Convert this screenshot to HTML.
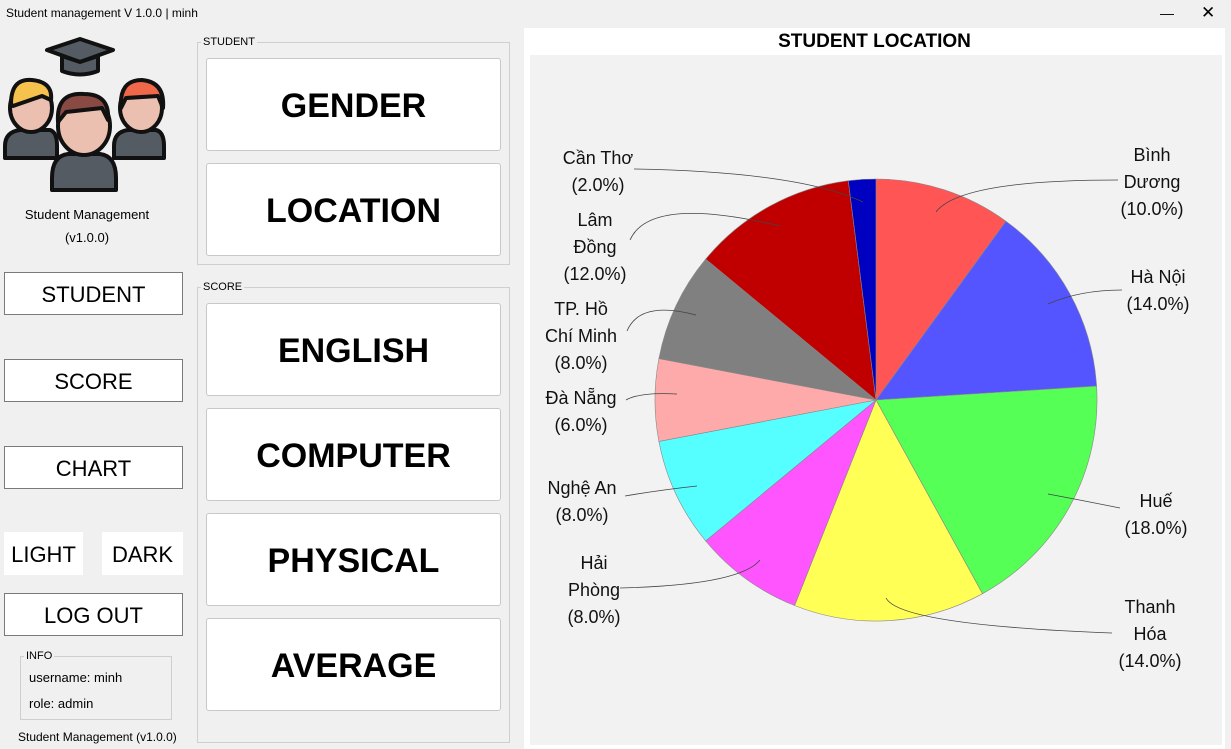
<!DOCTYPE html>
<html><head><meta charset="utf-8"><style>
*{box-sizing:border-box;margin:0;padding:0}
body{width:1231px;height:749px;background:#f0f0f0;font-family:"Liberation Sans",sans-serif;position:relative;overflow:hidden;color:#000}
.a{position:absolute}
.title{left:6px;top:6px;font-size:12px}
.btn{position:absolute;border:1px solid #7a7a7a;background:#fff;font-size:22px;display:flex;align-items:center;justify-content:center;padding-top:2px}
.nb{border:none}
.grp{position:absolute;border:1px solid #cfcfcf}
.lg{position:absolute;font-size:11px;background:#f0f0f0;padding:0 2px}
.big{position:absolute;left:206px;width:295px;height:93px;background:#fff;border:1px solid #c8c8c8;border-radius:3px;display:flex;align-items:center;justify-content:center;font-weight:bold;font-size:34px;padding-top:4px}
.lbl{position:absolute;font-size:18px;line-height:27px;text-align:center;color:#111}
</style></head><body>
<div class="a title">Student management V 1.0.0 | minh</div>
<div class="a" style="left:1160px;top:5px;font-size:14px">&#8212;</div>
<div class="a" style="left:1201px;top:3px;font-size:17px">&#10005;</div>

<svg class="a" style="left:2px;top:36px" width="166" height="156" viewBox="0 0 166 156">
<g stroke="#111" stroke-width="4" stroke-linejoin="round">
<path d="M45 14 L78 3 L111 14 L78 26 Z" fill="#555b63"/>
<path d="M60 20 L60 35 Q78 42 96 35 L96 20 L78 26 Z" fill="#555b63"/>
<path d="M3 110 Q3 96 18 94 L28 94 L28 86 L38 86 L38 94 L48 94 Q55 96 55 110 L55 122 L3 122 Z" fill="#555b63"/>
<ellipse cx="29" cy="72" rx="21" ry="24" fill="#ebc0b0"/>
<path d="M9 68 Q9 42 30 44 Q51 46 49 64 L40 60 L11 70 Z" fill="#f5c24d"/>
<path d="M112 110 Q112 96 126 94 L136 94 L136 86 L146 86 L146 94 L154 94 Q162 96 162 110 L162 122 L112 122 Z" fill="#555b63"/>
<ellipse cx="139" cy="72" rx="21" ry="24" fill="#ebc0b0"/>
<path d="M119 72 Q117 44 140 44 Q163 46 161 72 L156 60 L124 62 Z" fill="#f0684a"/>
<path d="M50 142 Q50 120 66 118 L74 118 L74 110 L90 110 L90 118 L98 118 Q114 120 114 142 L114 154 L50 154 Z" fill="#555b63"/>
<ellipse cx="82" cy="90" rx="26" ry="29" fill="#ebc0b0"/>
<path d="M56 86 Q54 56 82 58 Q108 58 106 84 L100 72 L64 76 Z" fill="#8a4a44"/>
</g></svg>
<div class="a" style="left:0;width:174px;top:203px;text-align:center;font-size:13px;line-height:23px">Student Management<br>(v1.0.0)</div>

<div class="btn" style="left:4px;top:272px;width:179px;height:43px">STUDENT</div>
<div class="btn" style="left:4px;top:359px;width:179px;height:43px">SCORE</div>
<div class="btn" style="left:4px;top:446px;width:179px;height:43px">CHART</div>
<div class="btn nb" style="left:4px;top:532px;width:79px;height:43px">LIGHT</div>
<div class="btn nb" style="left:102px;top:532px;width:81px;height:43px">DARK</div>
<div class="btn" style="left:4px;top:593px;width:179px;height:43px">LOG OUT</div>
<div class="grp" style="left:20px;top:656px;width:152px;height:64px"></div>
<div class="lg" style="left:24px;top:650px">INFO</div>
<div class="a" style="left:29px;top:670px;font-size:13px">username: minh</div>
<div class="a" style="left:29px;top:696px;font-size:13px">role: admin</div>
<div class="a" style="left:18px;top:730px;font-size:12px">Student Management (v1.0.0)</div>

<div class="grp" style="left:197px;top:42px;width:313px;height:223px"></div>
<div class="lg" style="left:201px;top:36px">STUDENT</div>
<div class="big" style="top:58px">GENDER</div>
<div class="big" style="top:163px">LOCATION</div>
<div class="grp" style="left:197px;top:287px;width:313px;height:456px"></div>
<div class="lg" style="left:201px;top:281px">SCORE</div>
<div class="big" style="top:303px">ENGLISH</div>
<div class="big" style="top:408px">COMPUTER</div>
<div class="big" style="top:513px">PHYSICAL</div>
<div class="big" style="top:618px">AVERAGE</div>

<div class="a" style="left:524px;top:28px;width:701px;height:721px;background:#fff"></div>
<div class="a" style="left:530px;top:55px;width:692px;height:690px;background:#f2f2f2"></div>
<div class="a" style="left:524px;top:31px;width:701px;text-align:center;font-weight:bold;font-size:19px">STUDENT LOCATION</div>

<svg class="a" style="left:0;top:0" width="1231" height="749">
<g stroke="#888" stroke-width="0.6">
<path d="M876 400 L876 179 A221 221 0 0 1 1005.9 221.2 Z" fill="#ff5555"/>
<path d="M876 400 L1005.9 221.2 A221 221 0 0 1 1096.6 386.1 Z" fill="#5555ff"/>
<path d="M876 400 L1096.6 386.1 A221 221 0 0 1 982.5 593.7 Z" fill="#55ff55"/>
<path d="M876 400 L982.5 593.7 A221 221 0 0 1 794.6 605.5 Z" fill="#ffff55"/>
<path d="M876 400 L794.6 605.5 A221 221 0 0 1 705.7 540.9 Z" fill="#ff55ff"/>
<path d="M876 400 L705.7 540.9 A221 221 0 0 1 658.9 441.4 Z" fill="#55ffff"/>
<path d="M876 400 L658.9 441.4 A221 221 0 0 1 658.9 358.6 Z" fill="#ffaaaa"/>
<path d="M876 400 L658.9 358.6 A221 221 0 0 1 705.7 259.1 Z" fill="#808080"/>
<path d="M876 400 L705.7 259.1 A221 221 0 0 1 848.3 180.7 Z" fill="#c00000"/>
<path d="M876 400 L848.3 180.7 A221 221 0 0 1 876 179 Z" fill="#0000c0"/>
</g>
<g fill="none" stroke="#444" stroke-width="0.8">
<path d="M634 169 Q800 172 863 202"/>
<path d="M630 240 Q650 195 780 226"/>
<path d="M627 331 Q640 300 696 315"/>
<path d="M626 400 Q640 392 677 394"/>
<path d="M625 496 Q660 490 697 486"/>
<path d="M620 588 Q740 585 760 560"/>
<path d="M936 212 Q960 180 1118 180"/>
<path d="M1048 304 Q1080 290 1122 290"/>
<path d="M1048 494 Q1080 500 1120 508"/>
<path d="M886 598 Q900 625 1112 633"/>
</g>
</svg>
<div class="lbl" style="left:543px;top:145px;width:110px">Cần Thơ<br>(2.0%)</div>
<div class="lbl" style="left:540px;top:207px;width:110px">Lâm<br>Đồng<br>(12.0%)</div>
<div class="lbl" style="left:526px;top:296px;width:110px">TP. Hồ<br>Chí Minh<br>(8.0%)</div>
<div class="lbl" style="left:526px;top:385px;width:110px">Đà Nẵng<br>(6.0%)</div>
<div class="lbl" style="left:527px;top:475px;width:110px">Nghệ An<br>(8.0%)</div>
<div class="lbl" style="left:539px;top:550px;width:110px">Hải<br>Phòng<br>(8.0%)</div>
<div class="lbl" style="left:1097px;top:142px;width:110px">Bình<br>Dương<br>(10.0%)</div>
<div class="lbl" style="left:1103px;top:264px;width:110px">Hà Nội<br>(14.0%)</div>
<div class="lbl" style="left:1101px;top:488px;width:110px">Huế<br>(18.0%)</div>
<div class="lbl" style="left:1095px;top:594px;width:110px">Thanh<br>Hóa<br>(14.0%)</div>
</body></html>
